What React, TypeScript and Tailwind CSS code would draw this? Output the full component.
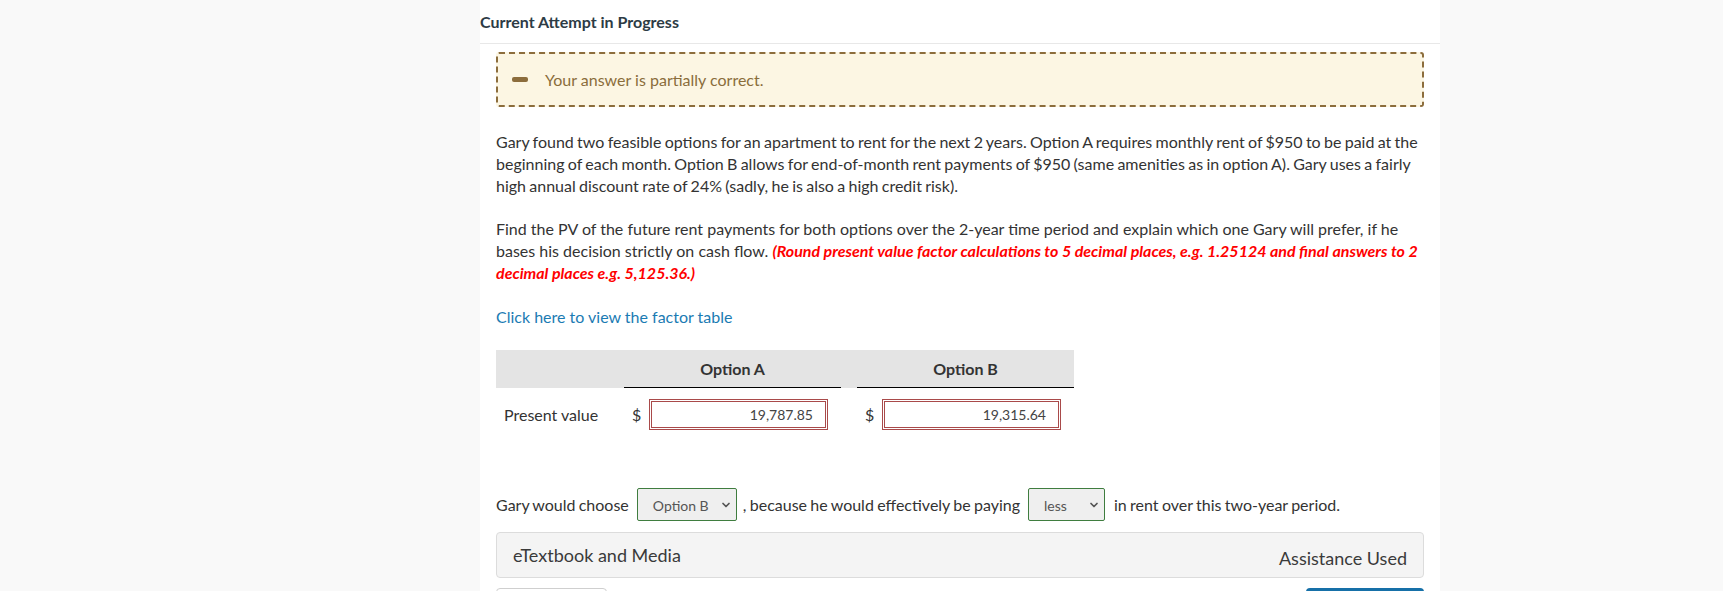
import { ChevronDown } from "lucide-react";

const FONT = { fontFamily: "Lato, 'Open Sans', sans-serif" };

function FakeSelect({ value, width }: { value: string; width: string }) {
  return (
    <div
      className={`flex h-[33px] ${width} items-center justify-between rounded-[2px] border border-[#3f7d3f] bg-[#efefef] pl-[15px] pr-[4px] text-[14px] text-[#555] [word-spacing:0px]`}
    >
      <span className="pt-[2px]">{value}</span>
      <ChevronDown size={12} strokeWidth={3.5} className="text-[#555]" />
    </div>
  );
}

function MoneyInput({ value }: { value: string }) {
  return (
    <div className="flex items-center">
      <span className="w-[16px] text-[16px] text-[#333]">$</span>
      <div className="ml-[1px] flex h-[31px] w-[179px] items-center justify-end border-[3px] border-double border-[#a94a4a] pr-[12px] text-[14px] text-[#444]">
        {value}
      </div>
    </div>
  );
}

export default function App() {
  return (
    <div className="flex min-h-screen bg-[#f9f9f9]" style={FONT}>
      <div className="w-[480px] shrink-0" />
      <div className="min-h-screen w-[960px] shrink-0 bg-white">
        <div className="flex h-[44px] items-center border-b border-[#e8e8e8] text-[16px] font-bold text-[#2d3b45]">
          Current Attempt in Progress
        </div>

        <div className="px-4">
          <div className="mt-[8px] flex h-[55px] items-center rounded-[3px] border-2 border-dashed border-[#8c6d3c] bg-[#fcf6e3] pl-[14px]">
            <span className="block h-[5px] w-[16px] rounded-[2px] bg-[#8c6d3c]" />
            <span className="ml-[17px] text-[16px] text-[#8a6d3b]">Your answer is partially correct.</span>
          </div>

          <div className="text-[16px] leading-[22px] text-[#333]">
            <p className="mt-[24px] [word-spacing:-0.8px]">
              Gary found two feasible options for an apartment to rent for the next 2 years. Option A requires monthly rent
              of $950 to be paid at the beginning of each month. Option B allows for end-of-month rent payments of $950
              (same amenities as in option A). Gary uses a fairly high annual discount rate of 24% (sadly, he is also a
              high credit risk).
            </p>
            <p className="mt-[21px]">
              Find the PV of the future rent payments for both options over the 2-year time period and explain which one
              Gary will prefer, if he bases his decision strictly on cash flow.{" "}
              <span className="font-bold italic text-[#ff0000]">
                (Round present value factor calculations to 5 decimal places, e.g. 1.25124 and final answers to 2
                decimal places e.g. 5,125.36.)
              </span>
            </p>
            <p className="mt-[22px] text-[#1b7bb3]">Click here to view the factor table</p>
          </div>

          <div className="mt-[22px] w-[578px]">
            <div className="flex h-[38px] bg-[#e4e4e4] text-[16px] font-bold text-[#333]">
              <div className="w-[128px]" />
              <div className="flex w-[217px] items-center justify-center border-b border-black">Option A</div>
              <div className="w-[16px]" />
              <div className="flex w-[217px] items-center justify-center border-b border-black">Option B</div>
            </div>
            <div className="flex items-center py-[11px]">
              <div className="w-[128px] pl-[8px] text-[16px] text-[#333]">Present value</div>
              <div className="w-[217px] pl-[8px]">
                <MoneyInput value="19,787.85" />
              </div>
              <div className="w-[16px]" />
              <div className="w-[217px] pl-[8px]">
                <MoneyInput value="19,315.64" />
              </div>
            </div>
          </div>

          <div className="mt-[47px] flex items-center text-[16px] text-[#333] [word-spacing:-0.8px]">
            <span>Gary would choose</span>
            <div className="ml-[8px]">
              <FakeSelect value="Option B" width="w-[100px]" />
            </div>
            <span className="ml-[6px]">, because he would effectively be paying</span>
            <div className="ml-[8px]">
              <FakeSelect value="less" width="w-[77px]" />
            </div>
            <span className="ml-[9px]">in rent over this two-year period.</span>
          </div>

          <div className="mt-[11px] flex h-[46px] items-center justify-between rounded-[4px] border border-[#dcdcdc] bg-[#f4f4f4] px-4 text-[18px] text-[#3a3a3a]">
            <span>eTextbook and Media</span>
            <span className="pt-[6px]">Assistance Used</span>
          </div>

          <div className="mt-[10px] flex justify-between">
            <div className="h-[36px] w-[111px] rounded-[4px] border border-[#cfcfcf] bg-white" />
            <div className="h-[36px] w-[118px] rounded-[4px] bg-[#1670a8]" />
          </div>
        </div>
      </div>
    </div>
  );
}
